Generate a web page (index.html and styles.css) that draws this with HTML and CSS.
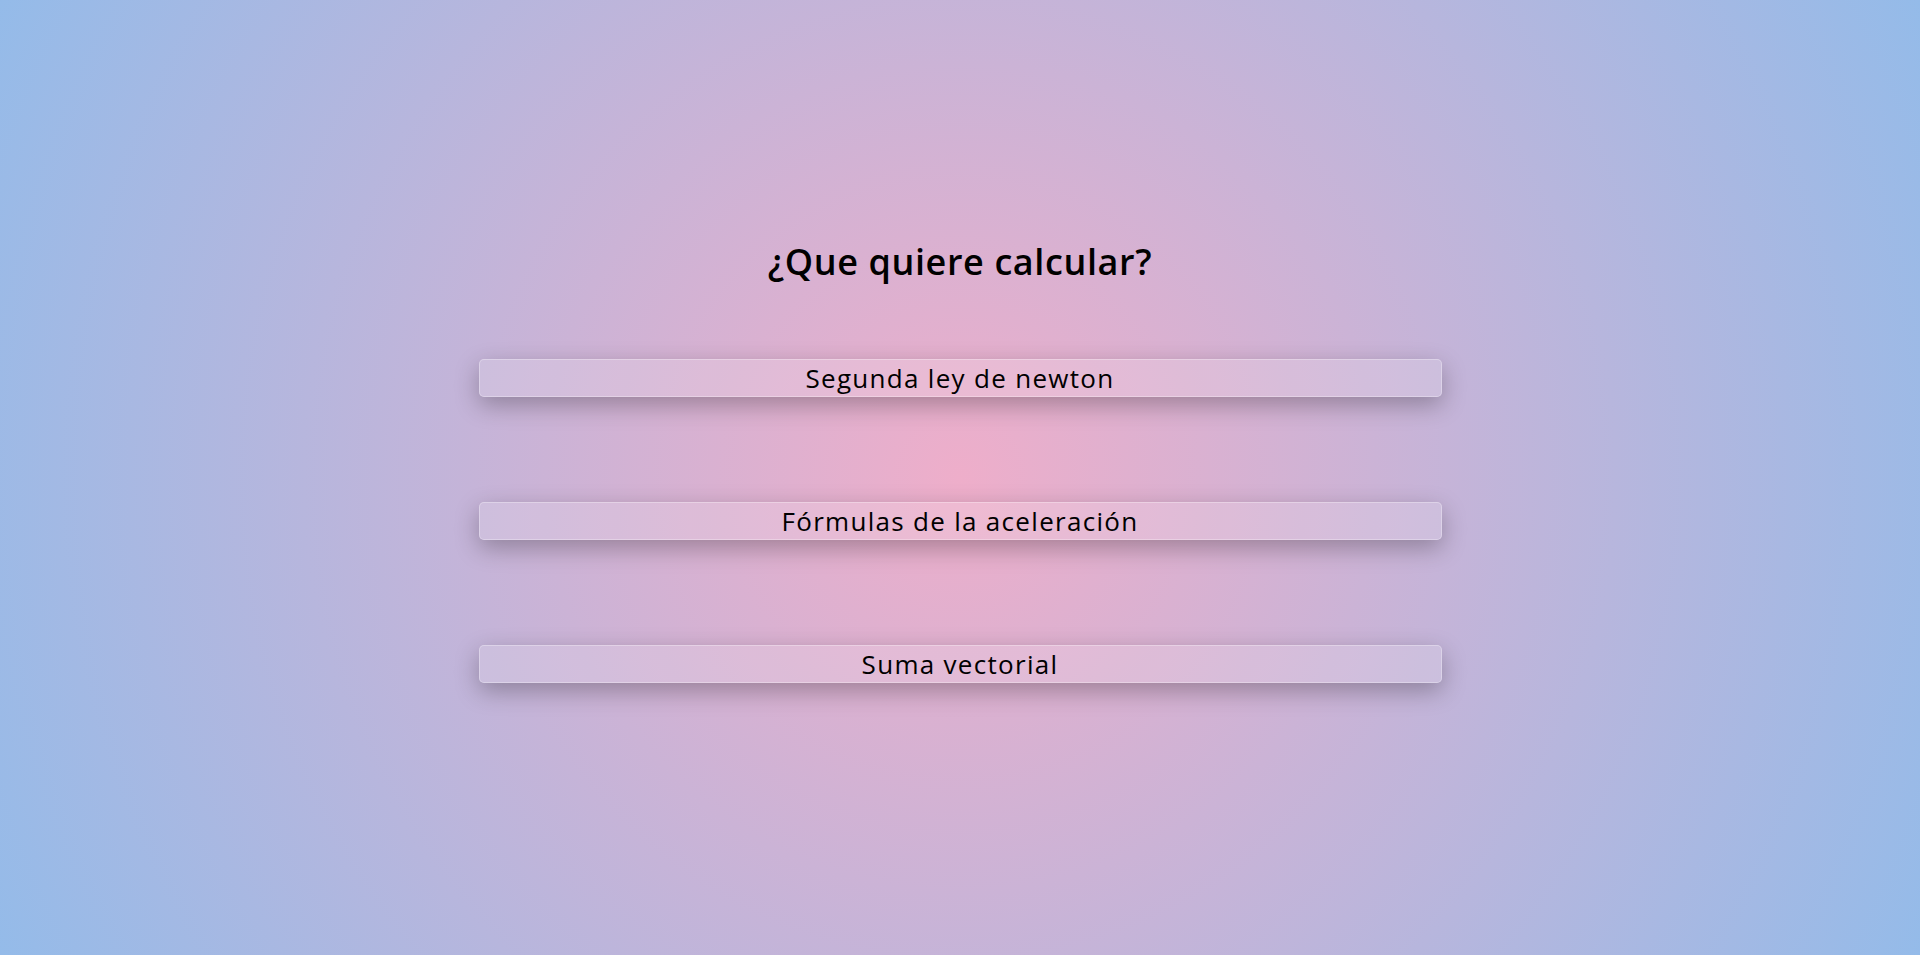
FILE: index.html
```html
<!DOCTYPE html>
<html lang="es">
<head>
<meta charset="utf-8">
<title>Calculadora</title>
<link rel="stylesheet" href="styles.css">
</head>
<body>
<main class="page">
  <h1 class="title">¿Que quiere calcular?</h1>
  <div class="options">
    <button class="option">Segunda ley de newton</button>
    <button class="option">Fórmulas de la aceleración</button>
    <button class="option">Suma vectorial</button>
  </div>
</main>
</body>
</html>
```

FILE: styles.css
```css
html, body {
  margin: 0;
  padding: 0;
  height: 100%;
}
body {
  background: radial-gradient(circle, #eeaeca 0%, #94bbe9 100%);
  font-family: "Open Sans", "Noto Sans", sans-serif;
  color: #000;
}
.page {
  display: flex;
  flex-direction: column;
  align-items: center;
  padding-top: 235px;
}
.title {
  margin: 0;
  font-size: 36px;
  line-height: 54px;
  font-weight: 600;
  letter-spacing: 0.6px;
}
.options {
  display: flex;
  flex-direction: column;
  gap: 105px;
  width: 963px;
  margin-top: 70px;
}
.option {
  box-sizing: border-box;
  height: 38px;
  width: 100%;
  padding: 0;
  border: 1px solid rgba(255, 255, 255, 0.3);
  border-radius: 5px;
  background: rgba(255, 255, 255, 0.15);
  box-shadow: 0 8px 24px rgba(0, 0, 0, 0.28);
  font-family: "Open Sans", "Noto Sans", sans-serif;
  font-size: 26px;
  line-height: 36px;
  color: #000;
  letter-spacing: 1.3px;
}
```
